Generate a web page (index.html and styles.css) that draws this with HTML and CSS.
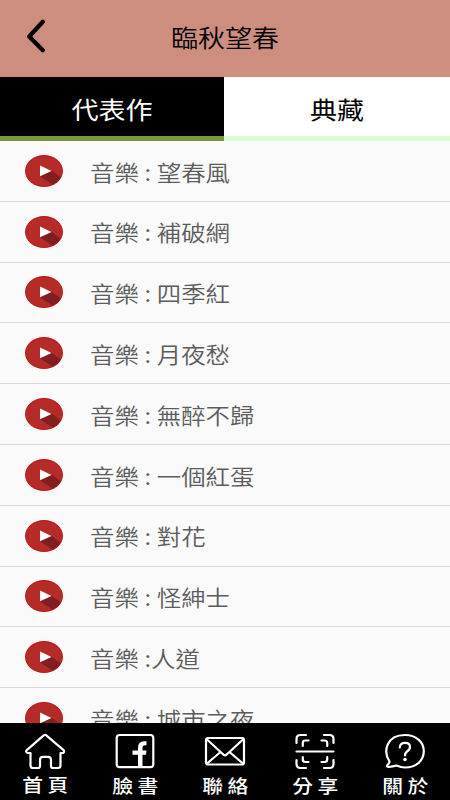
FILE: index.html
```html
<!DOCTYPE html>
<html lang="zh-Hant">
<head>
  <meta charset="UTF-8">
  <meta name="viewport" content="width=device-width, initial-scale=1.0">
  <title>臨秋望春</title>
  <link rel="stylesheet" href="styles.css">
</head>
<body>
  <!-- Shared play icon -->
  <svg class="symbols" width="0" height="0">
    <symbol id="play" viewBox="0 0 38 32">
      <ellipse cx="19" cy="16" rx="19" ry="16" fill="#c21517"/>
      <ellipse cx="19" cy="16.2" rx="18.2" ry="15" fill="#b52b27"/>
      <path d="M26 15.3 35.8 22.6Q33 27.2 27.8 29.8L15 21.3Z" fill="#821d20"/>
      <path d="M15 10.6 26.5 15.9 15 21.3Z" fill="#fff"/>
    </symbol>
  </svg>

  <div class="app">
    <header class="header">
      <svg class="back" width="20" height="34" viewBox="0 0 20 34">
        <path d="M16.8 2.8 3.2 17.5 16.8 31.2" fill="none" stroke="#000" stroke-width="4.3" stroke-linecap="round" stroke-linejoin="round"/>
      </svg>
      <h1 class="title"><span class="wide">臨秋望春</span></h1>
    </header>

    <div class="tabs">
      <div class="tab active"><span class="wide">代表作</span></div>
      <div class="tab"><span class="wide">典藏</span></div>
    </div>

    <ul class="list">
      <li class="item"><svg class="play"><use href="#play"/></svg><span class="name">音樂 : 望春風</span></li>
      <li class="item"><svg class="play"><use href="#play"/></svg><span class="name">音樂 : 補破網</span></li>
      <li class="item"><svg class="play"><use href="#play"/></svg><span class="name">音樂 : 四季紅</span></li>
      <li class="item"><svg class="play"><use href="#play"/></svg><span class="name">音樂 : 月夜愁</span></li>
      <li class="item"><svg class="play"><use href="#play"/></svg><span class="name">音樂 : 無醉不歸</span></li>
      <li class="item"><svg class="play"><use href="#play"/></svg><span class="name">音樂 : 一個紅蛋</span></li>
      <li class="item"><svg class="play"><use href="#play"/></svg><span class="name">音樂 : 對花</span></li>
      <li class="item"><svg class="play"><use href="#play"/></svg><span class="name">音樂 : 怪紳士</span></li>
      <li class="item"><svg class="play"><use href="#play"/></svg><span class="name">音樂 :人道</span></li>
      <li class="item"><svg class="play"><use href="#play"/></svg><span class="name">音樂 : 城市之夜</span></li>
    </ul>

    <nav class="nav">
      <a class="nav-item home">
        <svg class="nav-icon" viewBox="0 0 42 38">
          <path d="M20 2.2Q21 1.5 22 2.2L39.3 16.8Q41 18.8 39 20H36.5V32.5Q36.5 35 34 35H29Q27 35 27 33V27Q27 23.8 24 23.8H19Q16 23.8 16 27V33Q16 35 14 35H9Q6.5 35 6.5 32.5V20H3.5Q1 19 3 16.8Z"/>
        </svg>
        <span class="label">首頁</span>
      </a>
      <a class="nav-item">
        <svg class="nav-icon" viewBox="0 0 42 38">
          <rect x="2.7" y="2" width="36.6" height="32.2" rx="3"/>
          <path class="solid" d="M24 34V21.7H18.5V17.5H24V15Q24 8.3 30 8.3H32.5V12.3H31Q28.5 12.3 28.5 15.3V17.5H32.5L32 21.7H28.5V34Z"/>
        </svg>
        <span class="label">臉書</span>
      </a>
      <a class="nav-item">
        <svg class="nav-icon" viewBox="0 0 42 38">
          <rect x="2" y="5" width="38" height="26.5" rx="2"/>
          <path d="M3 6.5 18.5 20.8Q21 23.8 23.5 20.8L39 6.5M3 30.5 16.5 19M39 30.5 25.5 19"/>
        </svg>
        <span class="label">聯絡</span>
      </a>
      <a class="nav-item">
        <svg class="nav-icon" viewBox="0 0 42 38">
          <path d="M2.5 10V6Q2.5 2 6.5 2H12M30 2H35.5Q39.5 2 39.5 6V10M2.5 27V31Q2.5 35 6.5 35H12M30 35H35.5Q39.5 35 39.5 31V27M8.8 13V10Q8.8 7.5 11.3 7.5H14.5M27.5 7.5H30.7Q33.2 7.5 33.2 10V13M8.8 24V26.5Q8.8 29 11.3 29H14.5M27.5 29H30.7Q33.2 29 33.2 26.5V24M2.5 18.5H39.5"/>
        </svg>
        <span class="label">分享</span>
      </a>
      <a class="nav-item">
        <svg class="nav-icon" viewBox="0 0 42 38">
          <path d="M5.5 28.5C-1 19 2 2 21 2C32 2 39.8 9 39.8 18C39.8 28 32 34.5 21 34.5Q17 34.5 12.5 32.5Q9 33.5 4.5 34Q1.8 33.8 4 31.5Q5.3 30 5.5 28.5Z"/>
          <path d="M15.8 14.5Q16 9.8 21 9.8Q26 9.8 26 14Q26 16.5 23 18.5Q21 20 21 22.5"/>
          <circle class="solid" cx="21" cy="26.5" r="1.8"/>
        </svg>
        <span class="label">關於</span>
      </a>
    </nav>
  </div>
</body>
</html>
```
FILE: styles.css
```css
* {
  box-sizing: border-box;
}

body {
  margin: 0;
  font-family: "Noto Sans CJK TC", sans-serif;
  background-color: #fafafa;
}

.symbols {
  display: none;
}

.app {
  display: flex;
  flex-direction: column;
  height: 800px;
  overflow: hidden;
}

.header {
  display: grid;
  grid-template-columns: 80px 1fr 80px;
  align-items: center;
  flex: none;
  height: 76.5px;
  background-color: #cd8e80;
}

.back {
  margin-left: 26px;
  margin-top: -4px;
}

.title {
  margin: 0;
  padding-bottom: 2px;
  font-size: 24px;
  font-weight: 350;
  line-height: 36px;
  text-align: center;
}

/* lettering is slightly wider than tall */
.wide {
  display: inline-block;
  transform: scaleX(1.125);
}

.tabs {
  display: flex;
  flex: none;
  height: 64.5px;
}

.tab {
  flex: 1;
  padding-top: 14.5px;
  background-color: #fff;
  border-bottom: 5.5px solid #dcfcd2;
  color: #000;
  font-size: 24px;
  font-weight: 400;
  line-height: 36px;
  text-align: center;
}

.tab.active {
  flex: 0 0 224px;
  background-color: #000;
  border-bottom-color: #7c963e;
  color: #fff;
}

.list {
  flex: 1;
  min-height: 0;
  margin: 0;
  padding: 0;
  overflow: hidden;
  list-style: none;
}

.item {
  display: flex;
  align-items: center;
  height: 60.8px;
  padding-left: 25px;
  border-bottom: 1px solid #d9d9d9;
}

.play {
  width: 38px;
  height: 32px;
  margin-right: 26.5px;
}

.name {
  padding-bottom: 0.5px;
  color: #5c5c5c;
  font-size: 22px;
  font-weight: 350;
  line-height: 32px;
  white-space: pre;
  word-spacing: 0.2px;
  transform: scaleX(1.11);
  transform-origin: left;
}

.nav {
  display: flex;
  flex: none;
  height: 77px;
  background-color: #000;
}

.nav-item {
  display: flex;
  flex-direction: column;
  align-items: center;
  flex: 1;
  padding-top: 10px;
  color: #fff;
}

.nav-icon {
  width: 42px;
  height: 38px;
  fill: none;
  stroke: #fff;
  stroke-width: 2.2;
  stroke-linecap: round;
  stroke-linejoin: round;
}

.nav-icon .solid {
  fill: #fff;
  stroke: none;
}

.label {
  margin-top: 1px;
  padding-left: 4px;
  font-size: 18.4px;
  font-weight: 500;
  line-height: 26px;
  letter-spacing: 3.8px;
  transform: scaleX(1.13);
}

.home .label {
  margin-top: 0;
}
```
